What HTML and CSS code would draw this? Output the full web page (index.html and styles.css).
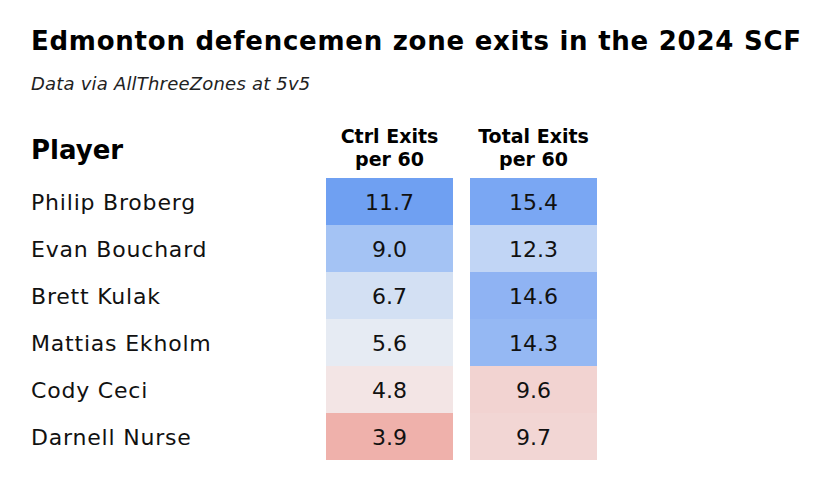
FILE: index.html
```html
<!DOCTYPE html>
<html lang="en">
<head>
<meta charset="utf-8">
<title>Edmonton defencemen zone exits</title>
<link rel="stylesheet" href="styles.css">
</head>
<body>
<main class="chart">
  <h1 class="title">Edmonton defencemen zone exits in the 2024 SCF</h1>
  <p class="subtitle">Data via AllThreeZones at 5v5</p>
  <div class="table">
    <div class="head head-player">Player</div>
    <div class="head head-stat">Ctrl Exits<br>per 60</div>
    <div class="head head-stat">Total Exits<br>per 60</div>

    <div class="name">Philip Broberg</div>
    <div class="cell" style="background:#6fa0f2">11.7</div>
    <div class="cell" style="background:#7aa7f3">15.4</div>

    <div class="name">Evan Bouchard</div>
    <div class="cell" style="background:#a4c3f4">9.0</div>
    <div class="cell" style="background:#c1d5f5">12.3</div>

    <div class="name">Brett Kulak</div>
    <div class="cell" style="background:#d3e0f3">6.7</div>
    <div class="cell" style="background:#8fb3f3">14.6</div>

    <div class="name">Mattias Ekholm</div>
    <div class="cell" style="background:#e6ebf3">5.6</div>
    <div class="cell" style="background:#95b8f3">14.3</div>

    <div class="name">Cody Ceci</div>
    <div class="cell" style="background:#f3e5e5">4.8</div>
    <div class="cell" style="background:#f2d3d1">9.6</div>

    <div class="name">Darnell Nurse</div>
    <div class="cell" style="background:#efb1ab">3.9</div>
    <div class="cell" style="background:#f2d6d4">9.7</div>
  </div>
</main>
</body>
</html>
```

FILE: styles.css
```css
html, body {
  margin: 0;
  padding: 0;
  background: #ffffff;
}

body {
  font-family: "DejaVu Sans", "Noto Sans", sans-serif;
  color: #111111;
}

.chart {
  padding: 23px 0 0 31px;
}

.title {
  margin: 0;
  font-size: 26px;
  line-height: 36px;
  font-weight: 700;
  color: #000000;
  letter-spacing: 0.75px;
  white-space: nowrap;
}

.subtitle {
  margin: 14px 0 0 0;
  font-size: 18px;
  line-height: 22px;
  font-style: italic;
  letter-spacing: 0.2px;
  color: #222222;
}

.table {
  margin-top: 25px;
  display: grid;
  grid-template-columns: 278px 127px 127px;
  grid-template-rows: 58px;
  grid-auto-rows: 47px;
  column-gap: 17px;
}

.head {
  font-weight: 700;
  color: #000000;
}

.head-player {
  font-size: 26px;
  line-height: 34px;
  align-self: end;
  padding-bottom: 11px;
}

.head-stat {
  font-size: 19px;
  line-height: 23px;
  text-align: center;
  align-self: end;
  padding-bottom: 7px;
}

.name {
  font-size: 22px;
  letter-spacing: 0.8px;
  display: flex;
  align-items: center;
  padding-top: 2px;
  color: #111111;
}

.cell {
  font-size: 22px;
  display: flex;
  align-items: center;
  justify-content: center;
  padding-top: 2px;
  color: #111111;
}
```
